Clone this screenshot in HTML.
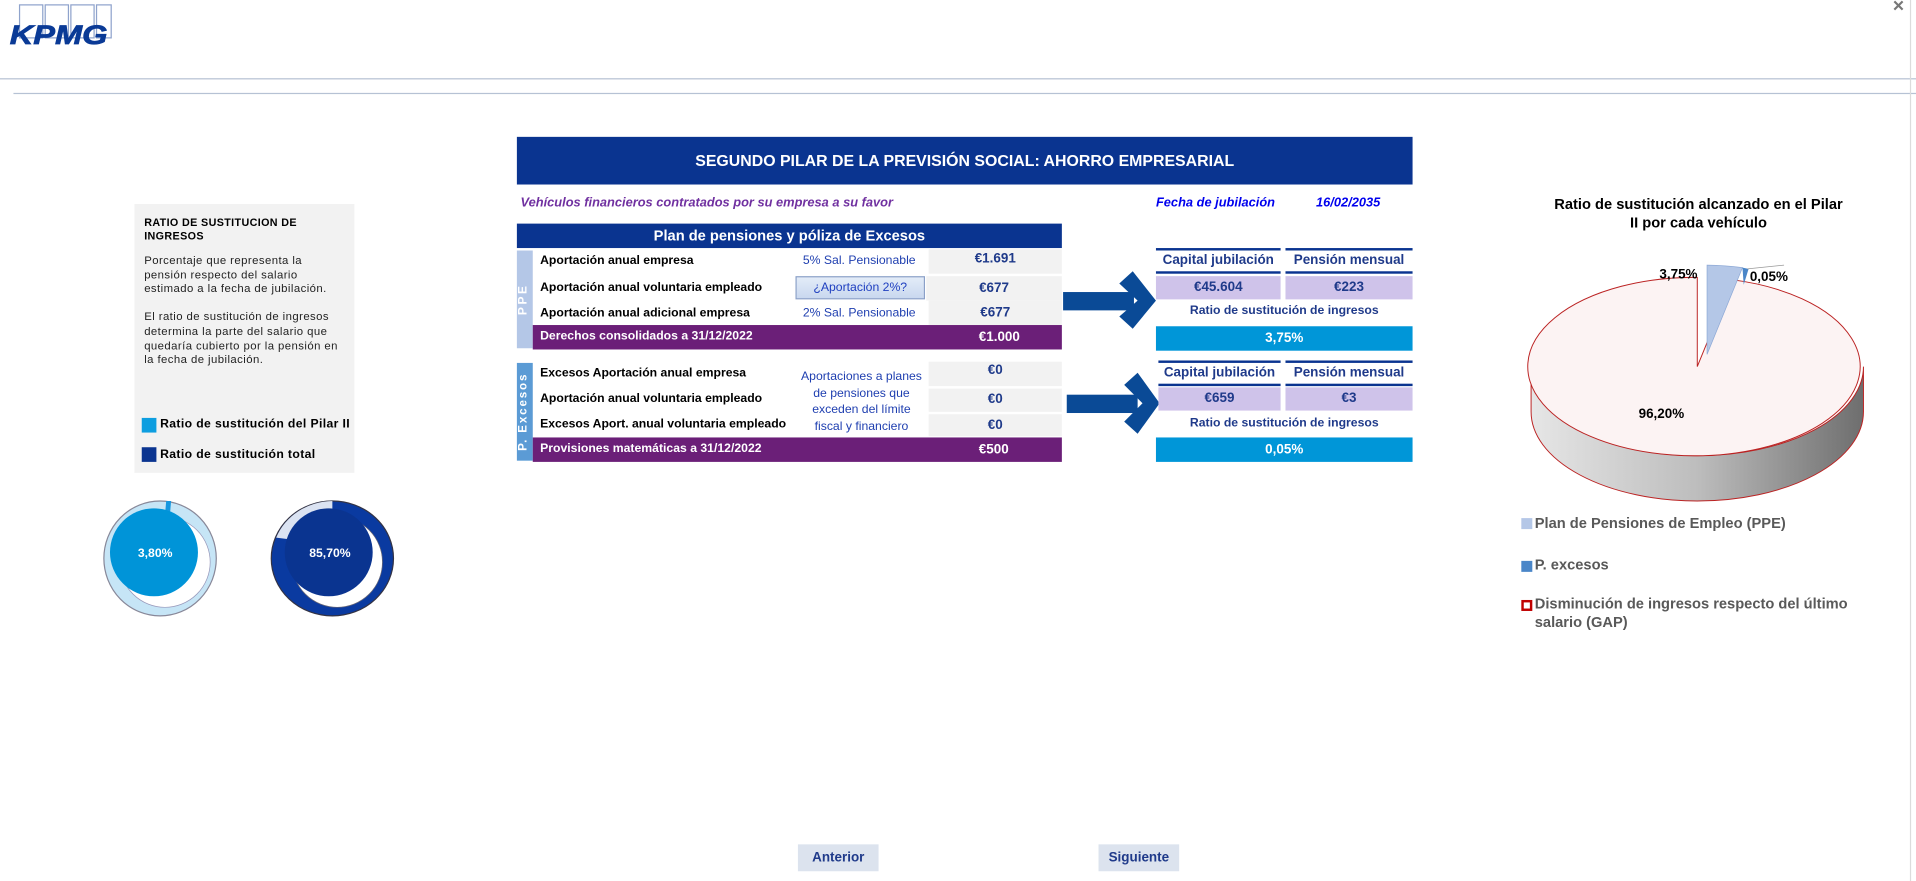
<!DOCTYPE html>
<html><head><meta charset="utf-8">
<style>
html,body{margin:0;padding:0;background:#fff;overflow:hidden;width:1916px;height:881px}
#s{position:absolute;left:0;top:0;width:1568px;height:721px;transform:scale(1.22194);transform-origin:0 0;font-family:"Liberation Sans",Arial,sans-serif}
.a{position:absolute}
.lab{position:absolute;font-size:10px;font-weight:bold;color:#000;white-space:nowrap}
.cell{position:absolute;background:#f2f2f2;color:#1f3a8a;font-weight:bold;font-size:11px;text-align:center}
.bl{position:absolute;color:#1f3fb0;font-size:10px;white-space:nowrap}
.pur{position:absolute;background:#6b1f78;color:#fff;font-weight:bold;font-size:10px}
.hd{position:absolute;border-top:2px solid #0a3490;border-bottom:2px solid #0a3490;color:#1f3a8a;font-size:11px;font-weight:bold;text-align:center;line-height:17px}
.lv{position:absolute;background:#cfc3ea;color:#1f3a8a;font-size:11px;font-weight:bold;text-align:center;line-height:19px}
.rt{position:absolute;font-size:10px;color:#1f3a8a;font-weight:bold;text-align:center}
.bar{position:absolute;background:#0096d8;color:#fff;font-weight:bold;font-size:11px;text-align:center;line-height:20px}
.btn{position:absolute;background:#dce3ee;color:#1f3a8a;font-size:11px;font-weight:bold;text-align:center;line-height:22px}
</style></head><body><div id="s">
<!-- logo -->
<svg class="a" style="left:6px;top:2px" width="90" height="40">
<rect x="10" y="2" width="19" height="27" fill="none" stroke="#8fa3cc" stroke-width="1"/>
<rect x="31" y="2" width="19" height="27" fill="none" stroke="#8fa3cc" stroke-width="1"/>
<rect x="52" y="2" width="19" height="27" fill="none" stroke="#8fa3cc" stroke-width="1"/>
<rect x="73" y="2" width="12" height="27" fill="none" stroke="#8fa3cc" stroke-width="1"/>
<text x="2" y="34" font-family="Liberation Sans" font-weight="bold" font-style="italic" font-size="22" fill="#0a3a96" stroke="#0a3a96" stroke-width="0.6" textLength="80" lengthAdjust="spacingAndGlyphs">KPMG</text>
</svg>
<div class="a" style="left:1549px;top:-3px;font-size:16px;color:#777;font-weight:bold">×</div>
<div class="a" style="left:0;top:64px;width:1568px;height:1px;background:#b6c2d4"></div>
<div class="a" style="left:11px;top:76px;width:1557px;height:1px;background:#b6c2d4"></div>
<div class="a" style="left:1563px;top:0;width:1px;height:721px;background:#dcdcdc"></div>

<!-- left box -->
<div class="a" style="left:110px;top:167px;width:180px;height:220px;background:#f2f2f2"></div>
<div class="a" style="left:118px;top:177px;width:140px;font-size:8.8px;font-weight:bold;line-height:10.5px;letter-spacing:0.3px">RATIO DE SUSTITUCION DE INGRESOS</div>
<div class="a" style="left:118px;top:208px;width:160px;font-size:9.3px;line-height:11.6px;color:#222;letter-spacing:0.35px">Porcentaje que representa la pensión respecto del salario estimado a la fecha de jubilación.<br><br>El ratio de sustitución de ingresos determina la parte del salario que quedaría cubierto por la pensión en la fecha de jubilación.</div>
<div class="a" style="left:116px;top:342px;width:12px;height:12px;background:#0d9ee0"></div>
<div class="a" style="left:131px;top:342px;font-size:10px;font-weight:bold;letter-spacing:0.3px">Ratio de sustitución del Pilar II</div>
<div class="a" style="left:116px;top:366px;width:12px;height:12px;background:#0a3490"></div>
<div class="a" style="left:131px;top:367px;font-size:10px;font-weight:bold;letter-spacing:0.3px">Ratio de sustitución total</div>

<!-- donuts -->
<svg class="a" style="left:80px;top:402px" width="260" height="112">
<ellipse cx="51" cy="55" rx="46" ry="47" fill="#c6e5f6" stroke="#889" stroke-width="1"/>
<ellipse cx="55" cy="58" rx="37" ry="37" fill="#fff" stroke="#99b" stroke-width="0.6"/>
<path d="M56 8 L60 8 L59 20 L55 20Z" fill="#1597e0"/>
<ellipse cx="46" cy="50" rx="36" ry="36" fill="#0094d8"/>
<text x="47" y="54" text-anchor="middle" font-size="10" font-weight="bold" fill="#fff" font-family="Liberation Sans">3,80%</text>
<ellipse cx="192" cy="55" rx="50" ry="47" fill="#0a3aa0" stroke="#334" stroke-width="1"/>
<path d="M192 8 A50 47 0 0 0 146 38 L162 40 A36 35 0 0 1 192 22Z" fill="#dbe3f2"/>
<ellipse cx="196" cy="58" rx="37" ry="37" fill="#fff" stroke="#667" stroke-width="0.6"/>
<ellipse cx="189" cy="50" rx="36" ry="36" fill="#0a3490"/>
<text x="190" y="54" text-anchor="middle" font-size="10" font-weight="bold" fill="#fff" font-family="Liberation Sans">85,70%</text>
</svg>

<!-- banner -->
<div class="a" style="left:423px;top:112px;width:733px;height:39px;background:#0a3490;color:#fff;font-weight:bold;font-size:13px;text-align:center;line-height:39px">SEGUNDO PILAR DE LA PREVISIÓN SOCIAL: AHORRO EMPRESARIAL</div>
<div class="a" style="left:426px;top:160px;font-size:10.5px;font-weight:bold;font-style:italic;color:#7030a0">Vehículos financieros contratados por su empresa a su favor</div>
<div class="a" style="left:946px;top:160px;font-size:10.5px;font-weight:bold;font-style:italic;color:#0000ee">Fecha de jubilación</div>
<div class="a" style="left:1077px;top:160px;font-size:10.5px;font-weight:bold;font-style:italic;color:#0000ee">16/02/2035</div>

<!-- plan table -->
<div class="a" style="left:423px;top:183px;width:446px;height:20px;background:#0a3490;color:#fff;font-weight:bold;font-size:12px;text-align:center;line-height:20px">Plan de pensiones y póliza de Excesos</div>
<div class="a" style="left:423px;top:205px;width:13px;height:80px;background:#b4c7e7"></div>
<div class="a" style="left:423px;top:205px;width:13px;height:80px;color:#fff;font-weight:bold;font-size:10px;writing-mode:vertical-rl;transform:rotate(180deg);text-align:center;letter-spacing:2px">PPE</div>
<div class="lab" style="left:442px;top:208px">Aportación anual empresa</div>
<div class="bl" style="left:657px;top:208px">5% Sal. Pensionable</div>
<div class="cell" style="left:760px;top:204px;width:109px;height:20px;line-height:16px">€1.691</div>
<div class="lab" style="left:442px;top:230px">Aportación anual voluntaria empleado</div>
<div class="a" style="left:651px;top:226px;width:104px;height:17px;background:linear-gradient(#e3ecf8,#c9d8ef);border:1px solid #8aa0c8;color:#2040c0;font-size:10px;text-align:center;line-height:17px">¿Aportación 2%?</div>
<div class="cell" style="left:758px;top:226px;width:111px;height:20px;line-height:20px">€677</div>
<div class="lab" style="left:442px;top:251px">Aportación anual adicional empresa</div>
<div class="bl" style="left:657px;top:251px">2% Sal. Pensionable</div>
<div class="cell" style="left:760px;top:246px;width:109px;height:20px;line-height:20px">€677</div>
<div class="pur" style="left:436px;top:266px;width:433px;height:20px;line-height:20px"><span style="margin-left:6px">Derechos consolidados a 31/12/2022</span><span style="position:absolute;left:365px;font-size:11px">€1.000</span></div>

<div class="a" style="left:423px;top:297px;width:13px;height:80px;background:#5b9bd5"></div>
<div class="a" style="left:423px;top:297px;width:13px;height:80px;color:#fff;font-weight:bold;font-size:9.5px;writing-mode:vertical-rl;transform:rotate(180deg);text-align:center;letter-spacing:1.5px">P. Excesos</div>
<div class="lab" style="left:442px;top:300px">Excesos Aportación anual empresa</div>
<div class="cell" style="left:760px;top:296px;width:109px;height:20px;line-height:14px">€0</div>
<div class="lab" style="left:442px;top:321px">Aportación anual voluntaria empleado</div>
<div class="cell" style="left:760px;top:318px;width:109px;height:19px;line-height:19px">€0</div>
<div class="lab" style="left:442px;top:342px">Excesos Aport. anual voluntaria empleado</div>
<div class="cell" style="left:760px;top:339px;width:109px;height:18px;line-height:18px">€0</div>
<div class="a" style="left:655px;top:302px;width:100px;text-align:center;color:#1f3fb0;font-size:10px;line-height:13.5px">Aportaciones a planes de pensiones que exceden del límite fiscal y financiero</div>
<div class="pur" style="left:436px;top:358px;width:433px;height:20px;line-height:20px"><span style="margin-left:6px">Provisiones matemáticas a 31/12/2022</span><span style="position:absolute;left:365px;font-size:11px">€500</span></div>

<!-- arrows -->
<svg class="a" style="left:860px;top:215px" width="100" height="150">
<g fill="#0a4a96">
<rect x="10" y="24" width="58" height="15"/>
<polygon points="56,17 67,7 86,31 67,54 56,44 71,31"/>
<rect x="13" y="108" width="58" height="15"/>
<polygon points="60,100 71,90 89,115 71,140 60,130 75,115"/>
</g>
</svg>

<!-- right tables -->
<div class="hd" style="left:946px;top:203px;width:102px">Capital jubilación</div>
<div class="hd" style="left:1052px;top:203px;width:104px">Pensión mensual</div>
<div class="lv" style="left:946px;top:226px;width:102px">€45.604</div>
<div class="lv" style="left:1052px;top:226px;width:104px">€223</div>
<div class="rt" style="left:946px;top:249px;width:210px">Ratio de sustitución de ingresos</div>
<div class="bar" style="left:946px;top:267px;width:210px">3,75%</div>
<div class="hd" style="left:948px;top:295px;width:100px">Capital jubilación</div>
<div class="hd" style="left:1052px;top:295px;width:104px">Pensión mensual</div>
<div class="lv" style="left:948px;top:317px;width:100px">€659</div>
<div class="lv" style="left:1052px;top:317px;width:104px">€3</div>
<div class="rt" style="left:946px;top:341px;width:210px">Ratio de sustitución de ingresos</div>
<div class="bar" style="left:946px;top:358px;width:210px">0,05%</div>

<!-- pie -->
<div class="a" style="left:1250px;top:160px;width:280px;text-align:center;font-size:12px;font-weight:bold;line-height:15px">Ratio de sustitución alcanzado en el Pilar<br>II por cada vehículo</div>
<svg class="a" style="left:1240px;top:200px" width="300" height="220">
<defs>
<linearGradient id="g" x1="0" x2="1"><stop offset="0" stop-color="#e6e6e6"/><stop offset="0.5" stop-color="#bdbdbd"/><stop offset="1" stop-color="#6e6e6e"/></linearGradient>
</defs>
<path d="M13 100 L13 137 A136 73 0 0 0 285 137 L285 100 A136 73 0 0 1 13 100Z" fill="url(#g)" stroke="#b22" stroke-width="0.8"/>
<path d="M149 100 L149 27 A136 73 0 1 0 178 29 Z" fill="#fcf3f3" stroke="#b22" stroke-width="0.8"/>
<path d="M157 90 L157 17 A136 73 0 0 1 186 19 Z" fill="#b4c7e7" stroke="#8ea9d6" stroke-width="0.6"/>
<path d="M186 19 L191 20 L187 33Z" fill="#4a86c8"/>
<line x1="190" y1="20" x2="220" y2="17" stroke="#999" stroke-width="0.6"/>
<text x="118" y="28" font-size="11" font-weight="bold" font-family="Liberation Sans">3,75%</text>
<text x="192" y="30" font-size="11" font-weight="bold" font-family="Liberation Sans">0,05%</text>
<text x="101" y="142" font-size="11" font-weight="bold" font-family="Liberation Sans">96,20%</text>
</svg>
<div class="a" style="left:1245px;top:424px;width:9px;height:9px;background:#b4c7e7"></div>
<div class="a" style="left:1256px;top:421px;font-size:12px;font-weight:bold;color:#595959">Plan de Pensiones de Empleo (PPE)</div>
<div class="a" style="left:1245px;top:459px;width:9px;height:9px;background:#4a86c8;border:0"></div>
<div class="a" style="left:1256px;top:455px;font-size:12px;font-weight:bold;color:#595959">P. excesos</div>
<div class="a" style="left:1245px;top:491px;width:5px;height:5px;border:2px solid #c00000;background:#fff"></div>
<div class="a" style="left:1256px;top:487px;width:260px;font-size:12px;font-weight:bold;color:#595959;line-height:15px">Disminución de ingresos respecto del último salario (GAP)</div>

<!-- buttons -->
<div class="btn" style="left:653px;top:691px;width:66px">Anterior</div>
<div class="btn" style="left:899px;top:691px;width:66px">Siguiente</div>
</div></body></html>
